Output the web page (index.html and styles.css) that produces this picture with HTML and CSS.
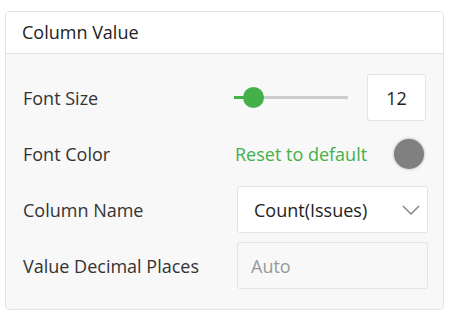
FILE: index.html
```html
<!DOCTYPE html>
<html lang="en">
<head>
   <meta charset="UTF-8">
   <title>Column Value</title>
   <link rel="stylesheet" href="styles.css">
</head>
<body>
   <div class="card">
      <div class="card-head">Column Value</div>
      <div class="card-body">
         <div class="row">
            <div class="label">Font Size</div>
            <div class="control">
               <div class="slider">
                  <div class="slider-fill"></div>
                  <div class="slider-thumb"></div>
               </div>
               <div class="num-box">12</div>
            </div>
         </div>
         <div class="row">
            <div class="label">Font Color</div>
            <div class="control">
               <span class="reset">Reset to default</span>
               <span class="swatch"></span>
            </div>
         </div>
         <div class="row">
            <div class="label">Column Name</div>
            <div class="control">
               <div class="select">
                  <span>Count(Issues)</span>
                  <svg class="chevron" width="18" height="10" viewBox="0 0 18 10">
                     <path d="M1 1 L9 9 L17 1" fill="none" stroke="#888" stroke-width="1.5"/>
                  </svg>
               </div>
            </div>
         </div>
         <div class="row">
            <div class="label">Value Decimal Places</div>
            <div class="control">
               <input class="text-input" type="text" placeholder="Auto">
            </div>
         </div>
      </div>
   </div>
</body>
</html>
```

FILE: styles.css
```css
body {
   margin: 0;
   background: #fff;
   font-family: "Open Sans", "Liberation Sans", sans-serif;
   color: #333;
}

.card {
   margin: 11px 0 0 5px;
   width: 437px;
   border: 1px solid #e3e3e3;
   border-radius: 4px;
   overflow: hidden;
}

.card-head {
   height: 41px;
   line-height: 41px;
   padding-left: 16px;
   font-size: 18px;
   color: #222;
   background: #fff;
   border-bottom: 1px solid #e3e3e3;
}

.card-body {
   background: #f8f8f8;
   padding: 20px 15px 20px 17px;
   display: flex;
   flex-direction: column;
   gap: 9px;
}

.row {
   display: flex;
   align-items: center;
   height: 47px;
}

.label {
   width: 214px;
   font-size: 18px;
   color: #333;
}

.control {
   flex: 1;
   display: flex;
   align-items: center;
   height: 100%;
}

.slider {
   position: relative;
   margin-left: -3px;
   width: 114px;
   height: 3px;
   background: #cccccc;
}

.slider-fill {
   width: 19px;
   height: 100%;
   background: #44b04a;
}

.slider-thumb {
   position: absolute;
   left: 9px;
   top: -9px;
   width: 21px;
   height: 21px;
   border-radius: 50%;
   background: #44b04a;
}

.num-box {
   margin-left: auto;
   margin-right: 2px;
   width: 57px;
   height: 45px;
   border: 1px solid #e3e3e3;
   border-radius: 3px;
   background: #fff;
   display: flex;
   align-items: center;
   justify-content: center;
   font-size: 18px;
   color: #222;
}

.reset {
   margin-left: -2px;
   font-size: 18px;
   color: #44b04a;
}

.swatch {
   margin-left: auto;
   margin-right: 4px;
   width: 30px;
   height: 30px;
   border-radius: 50%;
   background: #808080;
   box-shadow: 0 0 3px rgba(0, 0, 0, .35);
}

.select {
   width: 100%;
   box-sizing: border-box;
   height: 47px;
   border: 1px solid #e3e3e3;
   border-radius: 3px;
   background: #fff;
   display: flex;
   align-items: center;
   padding: 0 7px 0 16px;
   font-size: 18px;
   color: #222;
}

.chevron {
   margin-left: auto;
}

.text-input {
   width: 100%;
   height: 47px;
   box-sizing: border-box;
   border: 1px solid #e3e3e3;
   border-radius: 3px;
   background: #f8f8f8;
   padding: 0 13px;
   font-family: inherit;
   font-size: 18px;
   color: #222;
   outline: none;
}

.text-input::placeholder {
   color: #999;
}
```
